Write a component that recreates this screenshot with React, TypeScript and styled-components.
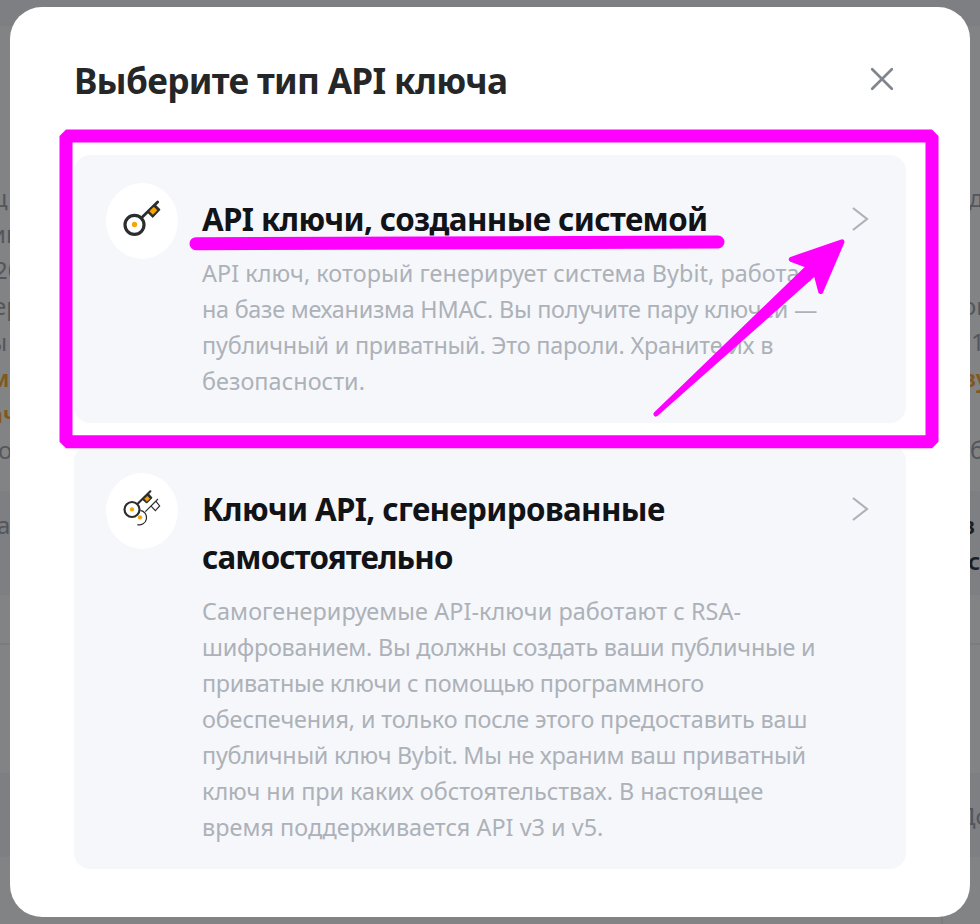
import React from "react";
import styled, { createGlobalStyle } from "styled-components";

const GlobalStyle = createGlobalStyle`
  * { box-sizing: border-box; }
  html, body { margin: 0; padding: 0; }
  body { font-family: "Noto Sans", "Open Sans", sans-serif; overflow: hidden; }
  h1, h2, p { margin: 0; }
`;

const Screen = styled.div`
  position: relative;
  width: 980px;
  height: 924px;
  overflow: hidden;
  background: #828384;
`;

/* Dimmed page behind the dialog */

const Page = styled.div`
  display: flex;
  flex-direction: column;
  height: 100%;
`;

const Band = styled.section<{ $height: number; $tinted?: boolean; $ruled?: boolean; $top?: number }>`
  flex: none;
  height: ${(p) => p.$height}px;
  padding-top: ${(p) => p.$top ?? 0}px;
  background: ${(p) => (p.$tinted ? "#7e7f83" : "#828384")};
  border-top: ${(p) => (p.$ruled ? "2px solid #7b7c7e" : "none")};
`;

const PageLine = styled.div`
  display: flex;
  justify-content: space-between;
  height: 36px;
  font-size: 24px;
  line-height: 36px;
  white-space: nowrap;
`;

const tones = { muted: "#54565b", link: "#80581c", strong: "#1d1e21" };
type Tone = keyof typeof tones;

const Fragment = styled.span<{ $tone?: Tone; $indent?: number }>`
  width: 10px;
  overflow: hidden;
  text-indent: ${(p) => p.$indent ?? 0}px;
  color: ${(p) => tones[p.$tone ?? "muted"]};
  font-weight: ${(p) => (p.$tone && p.$tone !== "muted" ? 600 : 450)};
`;

const FooterSplit = styled.div`
  width: 943px;
  height: 100%;
  border-right: 2px solid #7b7c7e;
`;

/* Dialog */

const Dialog = styled.main`
  position: absolute;
  top: 7px;
  left: 10px;
  width: 960px;
  height: 910px;
  padding: 48px 64px;
  border-radius: 32px;
  background: #fff;
`;

const Header = styled.header`
  display: flex;
  align-items: center;
  justify-content: space-between;
  height: 52px;
  padding-right: 11px;
`;

const Title = styled.h1`
  font-size: 35.2px;
  line-height: 52px;
  font-weight: 700;
  letter-spacing: -0.68px;
  color: #252627;
  white-space: nowrap;
  margin-bottom: 2px;
`;

const CloseButton = styled.button`
  display: flex;
  padding: 0;
  border: 0;
  background: none;
  margin-bottom: 4px;
`;

const Options = styled.div`
  display: flex;
  flex-direction: column;
  gap: 22px;
  margin-top: 48px;
`;

const Card = styled.article`
  display: flex;
  align-items: flex-start;
  padding: 28px 36px 24px 32px;
  border-radius: 16px;
  background: #f5f7fb;
`;

const IconDisc = styled.div`
  flex: none;
  width: 72px;
  height: 76px;
  border-radius: 50%;
  background: #fff;
`;

const CardBody = styled.div`
  flex: 1;
  min-width: 0;
  padding: 12px 0 0 24px;
`;

const CardTitle = styled.h2`
  font-size: 31.3px;
  line-height: 48px;
  font-weight: 700;
  color: #121316;
`;

const CardText = styled.p`
  margin-top: 12px;
  font-size: 23.4px;
  line-height: 36px;
  color: #adb1b8;
`;

const Line = styled.span<{ $tracking: number }>`
  display: block;
  white-space: nowrap;
  letter-spacing: ${(p) => p.$tracking}px;
`;

const ChevronSlot = styled.div`
  display: flex;
  flex: none;
  width: 18px;
  margin-top: 24px;
`;

const Annotations = styled.svg`
  position: absolute;
  inset: 0;
  pointer-events: none;
`;

const SingleKey = () => (
  <svg width="72" height="76" viewBox="18 24 216 228" fill="none">
    <circle cx="103.5" cy="149.5" r="28.5" stroke="#2c2d2f" strokeWidth="9.5" />
    <circle cx="103.5" cy="148.5" r="8" fill="#f7a600" />
    <path d="M124 129 L173 81" stroke="#2c2d2f" strokeWidth="8.5" strokeLinecap="round" />
    <path d="M165 91 L178 104 L158 125 L146 113 Z" fill="#2c2d2f" stroke="#2c2d2f" strokeWidth="6" strokeLinejoin="round" />
    <path d="M161.500 98.500 L169 106 L158.500 116.500 L151 109 Z" fill="#f7a600" stroke="#f7a600" strokeWidth="4" strokeLinejoin="round" />
  </svg>
);

const DoubleKey = () => (
  <svg width="72" height="76" viewBox="18 24 216 228" fill="none">
    <path d="M121 136 A22 22 0 1 1 112 179" stroke="#2c2d2f" strokeWidth="3.500" />
    <path d="M136 140 L174 102 M168 109 L179 123 L166 137 L154 124" stroke="#2c2d2f" strokeWidth="3.500" />
    <circle cx="96" cy="133.500" r="22.500" fill="#fff" stroke="#2c2d2f" strokeWidth="6.500" />
    <circle cx="96" cy="133" r="6.500" fill="#f7a600" />
    <circle cx="120" cy="157" r="6.500" fill="#f7a600" />
    <path d="M113 116 L151 79" stroke="#2c2d2f" strokeWidth="6.500" strokeLinecap="round" />
    <path d="M145 87 L155 98 L140 113 L128 103 Z" fill="#2c2d2f" stroke="#2c2d2f" strokeWidth="4" strokeLinejoin="round" />
    <path d="M142 94 L149 101 L141 109 L134 102 Z" fill="#f7a600" stroke="#f7a600" strokeWidth="2" />
  </svg>
);

const Chevron = () => (
  <svg width="18" height="24" viewBox="0 0 18 24" fill="none">
    <path d="M1 1 L15 12 L1 23" stroke="#adb1b8" strokeWidth="2.200" />
  </svg>
);

type TextLine = [text: string, tracking: number];

interface Option {
  icon: React.ReactNode;
  title: TextLine[];
  text: TextLine[];
}

const options: Option[] = [
  {
    icon: <SingleKey />,
    title: [["API ключи, созданные системой", -0.62]],
    text: [
      ["API ключ, который генерирует система Bybit, работает", 0.05],
      ["на базе механизма HMAC. Вы получите пару ключей —", -0.26],
      ["публичный и приватный. Это пароли. Храните их в", -0.21],
      ["безопасности.", 0.05],
    ],
  },
  {
    icon: <DoubleKey />,
    title: [
      ["Ключи API, сгенерированные", -0.62],
      ["самостоятельно", -0.85],
    ],
    text: [
      ["Самогенерируемые API-ключи работают с RSA-", 0.07],
      ["шифрованием. Вы должны создать ваши публичные и", -0.24],
      ["приватные ключи с помощью программного", -0.31],
      ["обеспечения, и только после этого предоставить ваш", -0.12],
      ["публичный ключ Bybit. Мы не храним ваш приватный", -0.29],
      ["ключ ни при каких обстоятельствах. В настоящее", -0.03],
      ["время поддерживается API v3 и v5.", 0.03],
    ],
  },
];

interface PageRow {
  left: string;
  leftIndent: number;
  right: string;
  rightIndent: number;
  tone?: Tone;
}

const pageRows: PageRow[] = [
  { left: "щ", leftIndent: -14, right: "да", rightIndent: -1 },
  { left: "ии", leftIndent: -9, right: "", rightIndent: 0 },
  { left: "20", leftIndent: -6, right: "", rightIndent: 0 },
  { left: "ер", leftIndent: -7, right: "ог", rightIndent: -8 },
  { left: "ы", leftIndent: -11, right: "1", rightIndent: 1 },
  { left: "м", leftIndent: -10, right: "ву", rightIndent: -8, tone: "link" },
  { left: "ач", leftIndent: -11, right: "", rightIndent: 0, tone: "link" },
  { left: "о", leftIndent: -2, right: "б", rightIndent: 0 },
];

export default function App() {
  return (
    <Screen>
      <GlobalStyle />
      <Page aria-hidden="true">
        <Band $height={26} $tinted />
        <Band $height={465} $top={154}>
          {pageRows.map((row) => (
            <PageLine key={row.left}>
              <Fragment $tone={row.tone} $indent={row.leftIndent}>{row.left}</Fragment>
              <Fragment $tone={row.tone} $indent={row.rightIndent}>{row.right}</Fragment>
            </PageLine>
          ))}
        </Band>
        <Band $height={104} $tinted $top={16}>
          <PageLine>
            <Fragment $indent={-3}>а</Fragment>
            <Fragment $tone="strong" $indent={-9}>в</Fragment>
          </PageLine>
          <PageLine>
            <Fragment />
            <Fragment $tone="strong" $indent={-2}>с</Fragment>
          </PageLine>
        </Band>
        <Band $height={48} />
        <Band $height={130} $ruled />
        <Band $height={84} $tinted $top={25}>
          <PageLine>
            <Fragment />
            <Fragment $indent={-12}>До</Fragment>
          </PageLine>
        </Band>
        <Band $height={67}>
          <FooterSplit />
        </Band>
      </Page>

      <Dialog role="dialog" aria-labelledby="dialog-title">
        <Header>
          <Title id="dialog-title">Выберите тип API ключа</Title>
          <CloseButton aria-label="Закрыть">
            <svg width="26" height="26" viewBox="0 0 26 26" fill="none">
              <path d="M3.200 3.200 L22.800 22.800 M22.800 3.200 L3.200 22.800" stroke="#81858c" strokeWidth="2.700" strokeLinecap="round" />
            </svg>
          </CloseButton>
        </Header>
        <Options>
          {options.map((option) => (
            <Card key={option.title[0][0]}>
              <IconDisc>{option.icon}</IconDisc>
              <CardBody>
                <CardTitle>
                  {option.title.map(([text, tracking]) => (
                    <Line key={text} $tracking={tracking}>{text}</Line>
                  ))}
                </CardTitle>
                <CardText>
                  {option.text.map(([text, tracking]) => (
                    <Line key={text} $tracking={tracking}>{text}</Line>
                  ))}
                </CardText>
              </CardBody>
              <ChevronSlot><Chevron /></ChevronSlot>
            </Card>
          ))}
        </Options>
      </Dialog>

      <Annotations width="980" height="924" viewBox="0 0 980 924" fill="none" stroke="#ff00ff">
        <rect x="66" y="136" width="866" height="305.700" strokeWidth="13" strokeLinejoin="bevel" />
        <path d="M196 243.700 L718 242" strokeWidth="13" strokeLinecap="round" />
        <path
          d="M656 414 L809.300 266.100 L791.300 259.300 L842 241.800 L820.700 291.500 L815.700 272.500 Z"
          fill="#ff00ff"
          strokeWidth="5"
          strokeLinejoin="round"
        />
      </Annotations>
    </Screen>
  );
}
